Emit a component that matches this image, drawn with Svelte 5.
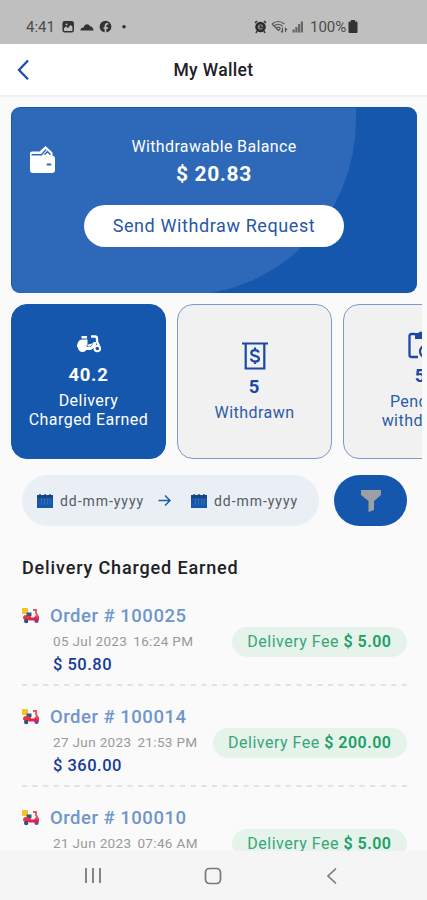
<script>
	const stats = [
		{ icon: 'scooter', value: '40.2', label: ['Delivery', 'Charged Earned'], active: true },
		{ icon: 'cash', value: '5', label: ['Withdrawn'] },
		{ icon: 'clipboard', value: '5', label: ['Pending', 'withdrawn'] }
	];

	const orders = [
		{ id: 100025, date: '05 Jul 2023', time: '16:24 PM', total: '50.80', fee: '5.00' },
		{ id: 100014, date: '27 Jun 2023', time: '21:53 PM', total: '360.00', fee: '200.00' },
		{ id: 100010, date: '21 Jun 2023', time: '07:46 AM', total: '43.20', fee: '5.00' }
	];
</script>

{#snippet calendar()}
	<svg class="calendar" width="16" height="14" viewBox="0 0 16 14">
		<path d="M0 1h16v13H0z" fill="#1557ac" />
		<path d="M0 1h2v1h2V1h8v1h2V1h2v3H0z" fill="#164886" />
		<path d="M3 0v3M8 0v3M13 0v3" stroke="#123c75" stroke-width="1.3" />
		<path d="M4.500 5v6M7.500 5v6M10.500 5v6M13 5v6" stroke="#3f78b4" stroke-width="1" stroke-dasharray="2 .7" />
	</svg>
{/snippet}

<div class="screen">
	<div class="status">
		<span class="clock">4:41</span>
		<svg class="notices" width="66" height="14" viewBox="0 0 66 14">
			<rect x="1.2" y="1.7" width="10" height="10" rx="1.5" fill="none" stroke="#333" stroke-width="1.5" />
			<path d="M1.500 2h9.500v5l-2.500-2-2.500 3-2-1.500-2.500 2z" fill="#333" />
			<circle cx="4.500" cy="4.500" r="1" fill="#c0c0c0" />
			<path d="M18.500 10.500c0-2 1.500-3.300 3.200-3 .8-4 5.200-4.200 6.200-1.300 2 0 3.500 1.700 3.600 4.300z" fill="#333" />
			<circle cx="43.500" cy="6.700" r="5.900" fill="#333" />
			<path d="M43.500 13V6c0-1.700.8-2.400 2.800-2.200M41.500 8h4.600" fill="none" stroke="#c0c0c0" stroke-width="1.700" />
			<circle cx="62" cy="6.700" r="1.800" fill="#333" />
		</svg>
		<svg class="signals" width="50" height="14" viewBox="0 0 50 14">
			<path d="M1 3l2-2M10 1l2 2M3 11l-1 2M10 11l1 2" stroke="#333" stroke-width="1.600" />
			<circle cx="6.500" cy="7" r="4" fill="#888" stroke="#2b2b2b" stroke-width="2.600" />
			<path d="M6.500 5v2.500h2.300" fill="none" stroke="#2b2b2b" stroke-width="1.300" />
			<g fill="none" stroke="#555" stroke-width="1.200">
				<path d="M18 4q6-5 12.500 0M20 6q4-3.500 8.500 0M22.300 8q2-1.800 4 0" />
				<path d="M18 4l6.500 6.500 2-2M28.500 7.500v5M27 11l1.500 1.500M31.500 12V8.500L33 10" />
			</g>
			<g fill="#666">
				<rect x="38.500" y="9.500" width="2.200" height="3" />
				<rect x="41.300" y="7" width="2.200" height="5.500" />
				<rect x="44" y="4" width="2.200" height="8.500" />
				<rect x="46.800" y="1.500" width="2.200" height="11" />
			</g>
		</svg>
		<span class="percent">100%</span>
		<svg width="10" height="14" viewBox="0 0 10 14">
			<path d="M3 0h4v1.500h1.500q1 0 1 1V12q0 1-1 1h-7q-1 0-1-1V2.500q0-1 1-1H3z" fill="#333" />
		</svg>
	</div>

	<header>
		<svg width="14" height="22" viewBox="0 0 14 22">
			<path d="M12 1.500L3 11l9 9.200" fill="none" stroke="#1c4fa8" stroke-width="2.300" />
		</svg>
		<h1>My Wallet</h1>
	</header>

	<main>
		<section class="balance">
			<div class="arc"></div>
			<svg class="wallet" width="25" height="28" viewBox="0 0 25 28">
				<path d="M0 7.500Q0 5.500 2 5.500h7.500L15.500 0l7 6.500v3q2.500.5 2.500 3V24q0 3-3 3H3q-3 0-3-3z" fill="#fff" />
				<path d="M1.500 8.700h10l4.500-5.200M14.500 8.700l3-3.200 3 3.200" fill="none" stroke="#2e68b8" stroke-width="1.400" />
				<path d="M17.500 18.500h3" stroke="#2e68b8" stroke-width="1.900" stroke-linecap="round" />
			</svg>
			<p class="caption">Withdrawable Balance</p>
			<p class="amount">$ 20.83</p>
			<button class="send">Send Withdraw Request</button>
		</section>

		<section class="stats">
			{#each stats as stat}
				<article class="stat" class:active={stat.active}>
					{#if stat.icon === 'scooter'}
						<svg width="26" height="20" viewBox="0 0 26 20">
							<path d="M5.500 1h5.500v2.500H5.500z" fill="#fff" />
							<path d="M1 12.500C1 8 3 4.500 6 4.500h5.500v7H14l4-3.500" fill="#fff" />
							<circle cx="6.500" cy="12.500" r="4.500" fill="#fff" />
							<path d="M9 13.500h5.500q4.500-2.500 4.500-6.500" fill="none" stroke="#fff" stroke-width="3" />
							<path d="M15 1.500h4q2 0 2 2-.5 4 2 7" fill="none" stroke="#fff" stroke-width="2.300" />
							<circle cx="21.300" cy="13.500" r="2.800" fill="#1557ac" stroke="#fff" stroke-width="2" />
						</svg>
					{:else if stat.icon === 'cash'}
						<svg width="26" height="28" viewBox="0 0 26 28">
							<path d="M0 1.500h26M3.700 2v24.500h18.600V2" fill="none" stroke="#1b48a5" stroke-width="2.200" />
							<path d="M16.700 10.500c-.5-1.800-2-2.400-3.700-2.400-2.200 0-3.700 1.100-3.700 2.800 0 4 7.700 1.900 7.700 5.800 0 1.800-1.600 2.900-3.900 2.900s-3.800-1-4.100-2.900M13 5.500v3M13 19v3" fill="none" stroke="#1b48a5" stroke-width="2.200" />
						</svg>
					{:else}
						<svg class="clipboard" width="26" height="28" viewBox="0 0 26 28">
							<path d="M7 3H3.500Q1.500 3 1.500 5v19q0 2 2 2H10M19 3h3.500q2 0 2 2v8" fill="none" stroke="#1b48a5" stroke-width="2.300" />
							<path d="M7 2h3q3-3 6 0h3v6H7z" fill="#1b48a5" />
							<circle cx="18" cy="20.500" r="6" fill="none" stroke="#1b48a5" stroke-width="2.200" />
							<path d="M18 17v4h3" fill="none" stroke="#1b48a5" stroke-width="1.500" />
						</svg>
					{/if}
					<strong>{stat.value}</strong>
					<p>
						{#each stat.label as line}<span>{line}</span>{/each}
					</p>
				</article>
			{/each}
		</section>

		<div class="filters">
			<div class="range">
				{@render calendar()}
				<span>dd-mm-yyyy</span>
				<svg class="arrow" width="13" height="13" viewBox="0 0 13 13">
					<path d="M.5 6.500h11M7 1.500l5 5-5 5" fill="none" stroke="#1d59a9" stroke-width="1.500" />
				</svg>
				{@render calendar()}
				<span>dd-mm-yyyy</span>
			</div>
			<button class="filter" aria-label="Filter">
				<svg width="20" height="22" viewBox="0 0 20 22">
					<path d="M0 0h20v5L13 11v9l-5.500 2V11L0 5z" fill="#9c9fa4" />
				</svg>
			</button>
		</div>

		<h2>Delivery Charged Earned</h2>

		<ul>
			{#each orders as order}
				<li>
					<div class="title">
						<svg width="18" height="16" viewBox="0 0 18 16">
							<path d="M0 0h6v6H0z" fill="#f3c22c" />
							<path d="M4.500 4.500h5V8h-5z" fill="#246080" />
							<path d="M1 10q0-3 3-3l5 1.200V10h3l2-3 3 1v4H3q-2-1-2-2z" fill="#e93442" />
							<path d="M11 2h3v3l2 4" fill="none" stroke="#ef5262" stroke-width="1.900" />
							<circle cx="4.200" cy="13" r="2.200" fill="#315080" />
							<circle cx="14.500" cy="12.800" r="2.200" fill="#79409a" />
							<path d="M7 11h7" stroke="#f31b4b" stroke-width="3" />
						</svg>
						<h3>Order # {order.id}</h3>
					</div>
					<div class="detail">
						<div>
							<p class="date"><span>{order.date}</span><span>{order.time}</span></p>
							<p class="total">$ {order.total}</p>
						</div>
						<div class="fee">Delivery Fee <b>$ {order.fee}</b></div>
					</div>
					<svg class="dashes" width="385" height="2"><path d="M0 1h385" stroke="#d9dadb" stroke-width="1.500" stroke-dasharray="5 5.550" /></svg>
				</li>
			{/each}
		</ul>
	</main>

	<nav>
		<svg width="18" height="18" viewBox="0 0 18 18"><path d="M2 1v15M9 1v15M16 1v15" stroke="#858585" stroke-width="2" /></svg>
		<svg width="18" height="18" viewBox="0 0 18 18"><rect x="1.500" y="1.500" width="15" height="15" rx="4" fill="none" stroke="#777" stroke-width="1.700" /></svg>
		<svg width="18" height="18" viewBox="0 0 18 18"><path d="M13 1.500L5 9l8 7.500" fill="none" stroke="#777" stroke-width="1.600" /></svg>
	</nav>
</div>

<style>
	.screen {
		width: 427px;
		height: 900px;
		display: flex;
		flex-direction: column;
		overflow: hidden;
		background: #fafafa;
		font-family: Roboto, 'Liberation Sans', sans-serif;
		color: #202124;
	}
	h1, h2, h3, p, ul {
		margin: 0;
		padding: 0;
	}
	svg {
		display: block;
		flex: none;
	}
	button {
		border: none;
		padding: 0;
		font-family: inherit;
	}
	.status {
		flex: none;
		box-sizing: border-box;
		height: 44px;
		padding: 10px 69px 0 26px;
		display: flex;
		align-items: center;
		background: #bfbfbf;
		color: #4c4c4c;
		font-size: 15px;
	}
	.clock {
		width: 36px;
	}
	.signals {
		margin-left: auto;
		margin-right: 6px;
	}
	.percent {
		width: 38px;
	}
	header {
		flex: none;
		box-sizing: border-box;
		height: 53px;
		padding: 0 16px;
		display: grid;
		grid-template-columns: 14px 1fr 14px;
		align-items: center;
		background: #fff;
		border-bottom: 2px solid #f0f0f0;
	}
	h1 {
		text-align: center;
		font-size: 17.500px;
		font-weight: 500;
		letter-spacing: 0.35px;
	}
	main {
		flex: 1;
		min-height: 0;
		overflow: hidden;
		padding: 10px 0 0 11px;
	}
	.balance {
		position: relative;
		box-sizing: border-box;
		width: 406px;
		height: 186px;
		padding-top: 30px;
		display: flex;
		flex-direction: column;
		align-items: center;
		overflow: hidden;
		border-radius: 9px;
		background: #1557ac;
		color: #fff;
	}
	.arc {
		position: absolute;
		left: 1px;
		top: 1px;
		width: 344px;
		height: 188px;
		background: #2e68b8;
		border-radius: 8px 0 176px 0;
	}
	.balance > :not(.arc) {
		position: relative;
	}
	.balance > .wallet {
		position: absolute;
		left: 19px;
		top: 39px;
	}
	.caption {
		font-size: 16px;
		line-height: 20px;
		letter-spacing: 0.35px;
	}
	.amount {
		margin-top: 4px;
		font-size: 21px;
		line-height: 26px;
		font-weight: 700;
		letter-spacing: 0.6px;
	}
	.send {
		margin-top: 18px;
		width: 260px;
		height: 42px;
		padding-bottom: 2px;
		border-radius: 21px;
		background: #fff;
		color: #2757a8;
		font-size: 18px;
		letter-spacing: 0.6px;
	}
	.stats {
		width: 411px;
		margin-top: 11px;
		display: flex;
		gap: 11px;
		overflow: hidden;
	}
	.stat {
		flex: none;
		box-sizing: border-box;
		width: 155px;
		height: 155px;
		padding-top: 1px;
		display: flex;
		flex-direction: column;
		align-items: center;
		justify-content: center;
		border: 1px solid #7d9bc9;
		border-radius: 16px;
		background: #f1f1f1;
		color: #2b5ba9;
	}
	.stat.active {
		padding-top: 4px;
		border-color: #1557ac;
		background: #1557ac;
		color: #fff;
	}
	.active svg {
		margin-top: -4px;
	}
	.clipboard {
		margin-top: -3px;
	}
	.stat strong {
		margin-top: 5px;
		font-size: 18.500px;
		line-height: 24px;
		font-weight: 700;
		letter-spacing: 0.7px;
	}
	.active strong {
		margin-top: 8px;
	}
	.stat:not(.active) strong {
		color: #1b48a5;
	}
	.stat p {
		margin-top: 4px;
		font-size: 16px;
		line-height: 19px;
		letter-spacing: 0.45px;
		text-align: center;
	}
	.stat p span {
		display: block;
	}
	.filters {
		display: flex;
		gap: 15px;
		margin: 16px 20px 0 11px;
	}
	.range {
		box-sizing: border-box;
		width: 297px;
		height: 51px;
		padding-left: 15px;
		display: flex;
		align-items: center;
		border-radius: 26px;
		background: #e9eff5;
		color: #555b61;
		font-size: 14px;
		letter-spacing: 0.95px;
	}
	.range span {
		width: 92px;
		margin-left: 7px;
		white-space: nowrap;
	}
	.arrow {
		margin: 0 20px 0 6px;
	}
	.filter {
		width: 73px;
		height: 51px;
		display: grid;
		place-items: center;
		border-radius: 26px;
		background: #1557ac;
	}
	h2 {
		margin: 30px 0 0 11px;
		font-size: 18px;
		line-height: 24px;
		font-weight: 500;
		letter-spacing: 0.85px;
	}
	ul {
		list-style: none;
		margin: 22px 20px 0 11px;
	}
	li {
		height: 101px;
	}
	.title {
		height: 28px;
		display: flex;
		align-items: center;
		gap: 10px;
	}
	h3 {
		color: #6f96ca;
		font-size: 18.500px;
		line-height: 26px;
		font-weight: 500;
		letter-spacing: 0.5px;
	}
	.detail {
		height: 54px;
		display: flex;
		justify-content: space-between;
		padding-left: 31px;
	}
	.date {
		display: flex;
		gap: 6px;
		color: #999;
		font-size: 13.500px;
		line-height: 23px;
		letter-spacing: 0.35px;
		white-space: nowrap;
	}
	.total {
		color: #153b99;
		font-size: 16.500px;
		line-height: 24px;
		font-weight: 500;
		letter-spacing: 0.5px;
	}
	.fee {
		box-sizing: border-box;
		height: 30px;
		margin-top: -3px;
		padding: 0 15.500px;
		border-radius: 15px;
		background: #e5f3eb;
		color: #36a777;
		font-size: 16px;
		line-height: 30px;
		letter-spacing: 0.5px;
		white-space: nowrap;
	}
	.fee b {
		font-weight: 600;
		color: #1ba066;
	}
	nav {
		flex: none;
		height: 49px;
		padding: 0 86px 0 84px;
		display: flex;
		justify-content: space-between;
		align-items: center;
		background: #f5f5f5;
	}
</style>
